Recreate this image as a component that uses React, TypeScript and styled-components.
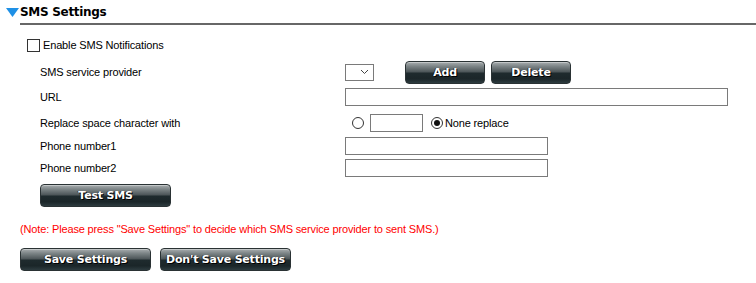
import React from "react";
import styled, { createGlobalStyle } from "styled-components";

const Global = createGlobalStyle`
  html, body { margin: 0; padding: 0; background: #fff; }
  body { font-family: "Liberation Sans", Arial, sans-serif; font-size: 11px; letter-spacing: -0.15px; color: #000; }
  * { box-sizing: border-box; }
`;

const Page = styled.div`
  width: 756px;
  height: 283px;
  overflow: hidden;
  padding-top: 4px;
`;

const Header = styled.div`
  display: flex;
  align-items: center;
  padding-left: 6px;
  height: 16px;
  gap: 1px;
`;

const Title = styled.h2`
  margin: 0;
  font-family: "DejaVu Sans", Verdana, sans-serif;
  font-size: 12px;
  font-weight: bold;
  letter-spacing: -0.3px;
`;

const Rule = styled.div`
  margin: 3px 0 0 20px;
  height: 2px;
  background: #676767;
`;

const Body = styled.div`
  padding: 0 0 0 20px;
`;

const CheckRow = styled.label`
  display: flex;
  align-items: center;
  gap: 3px;
  margin: 13px 0 0 7px;
  height: 14px;
`;

const Box = styled.span`
  width: 13px;
  height: 13px;
  border: 1px solid #333;
  background: #fff;
`;

const Form = styled.div`
  display: grid;
  grid-template-columns: 305px auto;
  margin-left: 20px;
  margin-top: 8px;
`;

const Label = styled.div<{ $h: number }>`
  height: ${(p) => p.$h}px;
  display: flex;
  align-items: center;
`;

const Field = styled.div<{ $h: number }>`
  height: ${(p) => p.$h}px;
  display: flex;
  align-items: center;
  gap: 6px;
`;

const TextBox = styled.div<{ $w: number; $h?: number }>`
  width: ${(p) => p.$w}px;
  height: ${(p) => p.$h ?? 18}px;
  border: 1px solid #7a7a7a;
  background: #fff;
`;

const Select = styled.div`
  width: 29px;
  height: 17px;
  border: 1px solid #7a7a7a;
  display: flex;
  align-items: center;
  justify-content: flex-end;
  padding-right: 4px;
  margin-right: 25px;
`;

const Radio = styled.span<{ $on?: boolean }>`
  width: 12px;
  height: 12px;
  border-radius: 50%;
  border: 1px solid #333;
  background: #fff;
  display: flex;
  align-items: center;
  justify-content: center;
  &::after {
    content: "";
    width: 6px;
    height: 6px;
    border-radius: 50%;
    background: ${(p) => (p.$on ? "#111" : "transparent")};
  }
`;

const RadioGroup = styled.span<{ $ml: number }>`
  display: flex;
  align-items: center;
  gap: 2px;
  margin-left: ${(p) => p.$ml}px;
`;

const Button = styled.button<{ $w: number }>`
  width: ${(p) => p.$w}px;
  height: 23px;
  padding: 0;
  border: 1px solid #2a3234;
  border-radius: 4px;
  background: linear-gradient(
    to bottom,
    #a9aeb0 0%,
    #7d8587 20%,
    #4b5457 48%,
    #1f2b2e 52%,
    #1b2629 80%,
    #2d3b3f 100%
  );
  box-shadow: inset 0 1px 0 rgba(255, 255, 255, 0.35);
  color: #fff;
  font-family: "DejaVu Sans", Verdana, sans-serif;
  font-size: 11px;
  font-weight: bold;
  letter-spacing: -0.2px;
  text-shadow: 1px 1px 0 #000, -1px 0 0 rgba(0,0,0,0.5);
  cursor: pointer;
`;

const ButtonRow = styled.div<{ $ml: number; $mt: number }>`
  display: flex;
  gap: 9px;
  margin-left: ${(p) => p.$ml}px;
  margin-top: ${(p) => p.$mt}px;
`;

const Note = styled.div`
  color: #ff0000;
  margin-top: 16px;
`;

const Chevron = () => (
  <svg width="9" height="6" viewBox="0 0 9 6">
    <path d="M1 1 L4.5 4.5 L8 1" fill="none" stroke="#444" strokeWidth="1" />
  </svg>
);

const Triangle = () => (
  <svg width="13" height="9" viewBox="0 0 13 9">
    <path d="M0 0 H13 L6.5 9 Z" fill="#1e90e6" />
  </svg>
);

export default function App() {
  return (
    <Page>
      <Global />
      <Header>
        <Triangle />
        <Title>SMS Settings</Title>
      </Header>
      <Rule />
      <Body>
        <CheckRow>
          <Box />
          Enable SMS Notifications
        </CheckRow>
        <Form>
          <Label $h={24}>SMS service provider</Label>
          <Field $h={24}>
            <Select>
              <Chevron />
            </Select>
            <Button $w={80}>Add</Button>
            <Button $w={80}>Delete</Button>
          </Field>
          <Label $h={26}>URL</Label>
          <Field $h={26}>
            <TextBox $w={383} />
          </Field>
          <Label $h={25}>Replace space character with</Label>
          <Field $h={25}>
            <RadioGroup $ml={7}>
              <Radio />
            </RadioGroup>
            <TextBox $w={53} />
            <RadioGroup $ml={2}>
              <Radio $on />
              None replace
            </RadioGroup>
          </Field>
          <Label $h={22}>Phone number1</Label>
          <Field $h={22}>
            <TextBox $w={203} />
          </Field>
          <Label $h={22}>Phone number2</Label>
          <Field $h={22}>
            <TextBox $w={203} />
          </Field>
        </Form>
        <ButtonRow $ml={20} $mt={5}>
          <Button $w={131}>Test SMS</Button>
        </ButtonRow>
        <Note>(Note: Please press "Save Settings" to decide which SMS service provider to sent SMS.)</Note>
        <ButtonRow $ml={0} $mt={13}>
          <Button $w={131}>Save Settings</Button>
          <Button $w={131}>Don't Save Settings</Button>
        </ButtonRow>
      </Body>
    </Page>
  );
}
